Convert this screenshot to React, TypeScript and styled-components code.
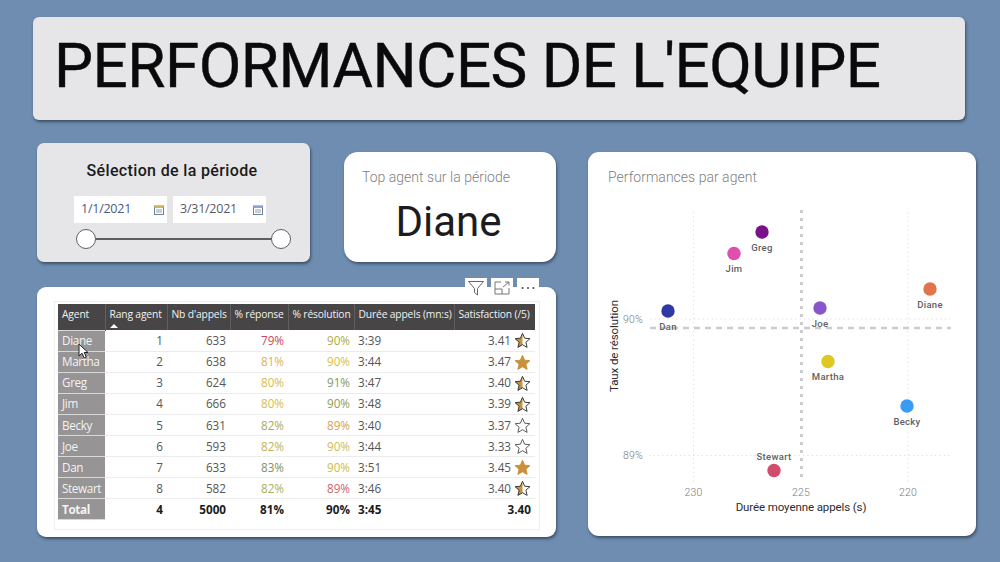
import React from "react";
import styled, { createGlobalStyle } from "styled-components";

const Global = createGlobalStyle`
  html, body { margin: 0; padding: 0; background: #6e8db1; }
  * { box-sizing: border-box; }
`;

const din = `Roboto, "Liberation Sans", sans-serif`;
const segoe = `"Open Sans", "Noto Sans", sans-serif`;

const Page = styled.div`
  width: 1000px;
  height: 562px;
  overflow: hidden;
  background: #6e8db1;
  padding: 17px 0 0 33px;
  font-family: ${din};
`;
const TitleCard = styled.header`
  width: 932px;
  height: 103px;
  background: #e6e5e8;
  border-radius: 6px;
  box-shadow: 1px 2px 3px rgba(35, 45, 60, 0.65);
  display: flex;
  align-items: center;
  padding: 0 0 6px 21px;
`;
const Title = styled.h1`
  margin: 0;
  font: 400 62px/1 ${din};
  letter-spacing: -0.55px;
  color: #0a0a0a;
  white-space: nowrap;
  -webkit-text-stroke: 0.4px #0a0a0a;
`;
const Main = styled.main`
  display: flex;
  margin: 23px 0 0 4px;
`;
const LeftColumn = styled.div`
  width: 519px;
`;
const TopRow = styled.div`
  display: flex;
  align-items: flex-end;
  gap: 34px;
`;
const FilterCard = styled.section`
  width: 273px;
  height: 119px;
  background: #e6e5e8;
  border-radius: 7px;
  box-shadow: 1px 2px 3px rgba(35, 45, 60, 0.65);
  padding: 18px 20px 0 37px;
`;
const FilterTitle = styled.div`
  font: 500 16px/20px ${din};
  letter-spacing: 0.35px;
  color: #1a1a1a;
  text-align: center;
  padding-right: 20px;
`;
const DateRow = styled.div`
  display: flex;
  gap: 6px;
  margin-top: 15px;
`;
const DateBox = styled.div`
  width: 93px;
  height: 27px;
  background: #fff;
  display: flex;
  align-items: center;
  justify-content: space-between;
  padding: 0 3px 0 7px;
  font: 400 12.5px/1 ${segoe};
  letter-spacing: -0.25px;
  color: ${(p: { $c: string }) => p.$c};
`;
const SliderTrack = styled.div`
  display: flex;
  align-items: center;
  width: 215px;
  margin: 6px 0 0 2px;
`;
const Thumb = styled.div`
  width: 20px;
  height: 20px;
  flex: none;
  border-radius: 50%;
  background: #fff;
  border: 1.5px solid #5f5f5f;
`;
const SliderLine = styled.div`
  flex: 1;
  height: 2.5px;
  background: #605e5c;
`;
const TopAgentCard = styled.section`
  width: 212px;
  height: 110px;
  background: #fff;
  border-radius: 14px;
  box-shadow: 1px 2px 3px rgba(35, 45, 60, 0.6);
  padding: 16px 0 0 18px;
`;
const CardHeading = styled.div`
  font: 300 14px/18px ${din};
  letter-spacing: 0.02px;
  color: #7f7f84;
`;
const TopAgentName = styled.div`
  font: 400 42px/48px ${din};
  color: #1c1c1e;
  text-align: center;
  padding-right: 21px;
  margin-top: 12px;
`;
const TableCard = styled.section`
  position: relative;
  margin-top: 25px;
  width: 519px;
  height: 250px;
  background: #fff;
  border-radius: 9px;
  box-shadow: 1px 2px 3px rgba(35, 45, 60, 0.65);
  padding: 14px 0 0 17px;
`;
const TableFrame = styled.div`
  width: 486px;
  height: 229px;
  border: 1px solid #eeeef0;
  padding: 2px 0 0 3px;
`;
const Table = styled.table`
  border-collapse: collapse;
  table-layout: fixed;
  width: 477px;
  font: 400 11.7px/1 ${segoe};
  color: #555;
`;
const Th = styled.th`
  height: 26px;
  background: #474545;
  color: #f2f2f2;
  font-weight: 400;
  font-size: 10.3px;
  letter-spacing: -0.16px;
  text-align: left;
  vertical-align: top;
  padding: 5px 0 0 4px;
  border-left: 1px solid #615f5f;
  white-space: nowrap;
  position: relative;
  &:first-child { border-left: 0; }
`;
const SortArrow = styled.span`
  position: absolute;
  left: 4px;
  bottom: 2px;
  width: 0;
  height: 0;
  border-left: 4px solid transparent;
  border-right: 4px solid transparent;
  border-bottom: 4px solid #fff;
`;
const Tr = styled.tr`
  height: 21.1px;
  border-bottom: 1px solid #ececee;
  &:last-child { border-bottom: 0; }
`;
const AgentCell = styled.td`
  background: #969495;
  color: #f3f3f3;
  padding: 1px 0 0 4px;
  border: 1px solid #d8d8d8;
  border-width: 1px 0;
  letter-spacing: -0.35px;
  font-weight: ${(p: { $b?: boolean }) => (p.$b ? 700 : 400)};
`;
const NumCell = styled.td<{ $c?: string; $b?: boolean }>`
  text-align: right;
  padding: 1px 4px 0 0;
  color: ${(p) => p.$b ? "#1c1c1c" : p.$c || "#555"};
  font-weight: ${(p) => (p.$b ? 700 : 400)};
`;
const TimeCell = styled.td<{ $b?: boolean }>`
  text-align: left;
  padding: 1px 0 0 4px;
  color: ${(p) => (p.$b ? "#1c1c1c" : "#555")};
  font-weight: ${(p) => (p.$b ? 700 : 400)};
`;
const SatInner = styled.div`
  display: flex;
  justify-content: flex-end;
  align-items: center;
  gap: 3px;
  padding: 1px 3px 0 0;
`;
const VisualActions = styled.div`
  position: absolute;
  top: -9px;
  right: 17px;
  display: flex;
  gap: 4px;
`;
const ActionBox = styled.div`
  width: 22px;
  height: 20px;
  background: #fff;
  display: flex;
  align-items: center;
  justify-content: center;
`;
const Cursor = styled.svg`
  position: absolute;
  left: 41px;
  top: 56px;
`;
const ChartCard = styled.section`
  width: 388px;
  height: 384px;
  margin: 9px 0 0 32px;
  background: #fff;
  border-radius: 11px;
  box-shadow: 1px 2px 3px rgba(35, 45, 60, 0.65);
  padding-top: 16px;
`;
const ChartHeading = styled(CardHeading)`
  padding-left: 20px;
  height: 22px;
`;
const ChartSvg = styled.svg`
  display: block;
`;

const STAR = "M8.5 1.3 L10.6 6.2 L15.9 6.7 L11.9 10.2 L13.1 15.4 L8.5 12.7 L3.9 15.4 L5.1 10.2 L1.1 6.7 L6.4 6.2 Z";

const Star = ({ kind }: { kind: "full" | "half" | "none" }) => {
  if (kind === "full")
    return (
      <svg width="17" height="17" viewBox="0 0 17 17">
        <path d={STAR} fill="#c8913a" stroke="#c8913a" strokeWidth="1" strokeLinejoin="round" />
      </svg>
    );
  return (
    <svg width="17" height="17" viewBox="0 0 17 17">
      <path d={STAR} fill="#fff" />
      {kind === "half" && (
        <path d="M8.5 1.3 L8.5 12.7 L3.9 15.4 L5.1 10.2 L1.1 6.7 L6.4 6.2 Z" fill="#c8913a" />
      )}
      <path d={STAR} fill="none" stroke={kind === "half" ? "#3a3a3a" : "#5c5c5c"} strokeWidth="1" strokeLinejoin="round" />
    </svg>
  );
};

const CalendarIcon = ({ accent }: { accent: string }) => (
  <svg width="10" height="10" viewBox="0 0 10 10">
    <rect x="0.5" y="1" width="9" height="8.5" fill="#fff" stroke="#5d7690" strokeWidth="0.9" />
    <rect x="0.5" y="1" width="9" height="2" fill={accent} />
    <path d="M2 5h6M2 7h6" stroke="#7f93aa" strokeWidth="0.9" />
  </svg>
);

type Row = { name: string; rank: number; calls: number; resp: string; respC: string; res: string; resC: string; time: string; sat: string; star: "full" | "half" | "none" };

const rows: Row[] = [
  { name: "Diane", rank: 1, calls: 633, resp: "79%", respC: "#c9475f", res: "90%", resC: "#a9ad4e", time: "3:39", sat: "3.41", star: "half" },
  { name: "Martha", rank: 2, calls: 638, resp: "81%", respC: "#d9b64f", res: "90%", resC: "#d9bf45", time: "3:44", sat: "3.47", star: "full" },
  { name: "Greg", rank: 3, calls: 624, resp: "80%", respC: "#d9b955", res: "91%", resC: "#7e9a68", time: "3:47", sat: "3.40", star: "half" },
  { name: "Jim", rank: 4, calls: 666, resp: "80%", respC: "#d9bb55", res: "90%", resC: "#8ea05e", time: "3:48", sat: "3.39", star: "half" },
  { name: "Becky", rank: 5, calls: 631, resp: "82%", respC: "#a9ab5e", res: "89%", resC: "#d99f52", time: "3:40", sat: "3.37", star: "none" },
  { name: "Joe", rank: 6, calls: 593, resp: "82%", respC: "#c0b45c", res: "90%", resC: "#c9c05a", time: "3:44", sat: "3.33", star: "none" },
  { name: "Dan", rank: 7, calls: 633, resp: "83%", respC: "#7f9168", res: "90%", resC: "#c9bd4e", time: "3:51", sat: "3.45", star: "full" },
  { name: "Stewart", rank: 8, calls: 582, resp: "82%", respC: "#aaae62", res: "89%", resC: "#cf5f72", time: "3:46", sat: "3.40", star: "half" },
];

const points = [
  { n: "Greg", x: 762, y: 232, c: "#7a1389", ly: 251 },
  { n: "Jim", x: 734, y: 253.5, c: "#de4fb0", ly: 272 },
  { n: "Dan", x: 668, y: 311, c: "#2f39a6", ly: 330 },
  { n: "Joe", x: 820, y: 308, c: "#8a55c8", ly: 327 },
  { n: "Diane", x: 930, y: 289, c: "#e2744c", ly: 308 },
  { n: "Martha", x: 828, y: 361.5, c: "#dfc724", ly: 380 },
  { n: "Becky", x: 907, y: 406, c: "#3a9bf5", ly: 425 },
  { n: "Stewart", x: 774, y: 470.5, c: "#d24c6e", ly: 460 },
];

const Plot = () => (
  <ChartSvg width="388" height="346" viewBox="588 190 388 346">
    <g stroke="#dedee3" strokeWidth="1" strokeDasharray="1.2 3.2" fill="none">
      <path d="M693.5 212V484M908 212V484M650 319H950M649 455.5H950" />
    </g>
    <path d="M801.5 210V482" stroke="#cbcbd0" strokeWidth="3" strokeDasharray="3 5" fill="none" />
    <path d="M650 328H951" stroke="#cbcbd0" strokeWidth="2.5" strokeDasharray="6 5" fill="none" />
    <g fontFamily={din} fontSize="10.5" fill="#7a7a7e" fontWeight="300" letterSpacing="0.2">
      <text x="633" y="323" textAnchor="middle">90%</text>
      <text x="633" y="459" textAnchor="middle">89%</text>
      <text x="693.5" y="496" textAnchor="middle">230</text>
      <text x="801" y="496" textAnchor="middle">225</text>
      <text x="908" y="496" textAnchor="middle">220</text>
    </g>
    <g fontFamily={din} fontSize="11.5" fill="#2c2c30" letterSpacing="-0.1">
      <text x="801" y="511" textAnchor="middle">Durée moyenne appels (s)</text>
      <text transform="translate(618 346) rotate(-90)" textAnchor="middle">Taux de résolution</text>
    </g>
    {points.map((p) => (
      <g key={p.n}>
        <circle cx={p.x} cy={p.y} r="6.7" fill={p.c} />
        <text x={p.x} y={p.ly} textAnchor="middle" fontFamily={din} fontSize="9.5" fontWeight="500" fill="#5f5f64" letterSpacing="0.3">{p.n}</text>
      </g>
    ))}
  </ChartSvg>
);

export default function App() {
  return (
    <Page>
      <Global />
      <TitleCard>
        <Title>PERFORMANCES DE L'EQUIPE</Title>
      </TitleCard>
      <Main>
        <LeftColumn>
          <TopRow>
            <FilterCard>
              <FilterTitle>Sélection de la période</FilterTitle>
              <DateRow>
                <DateBox $c="#4a5a80">1/1/2021<CalendarIcon accent="#d8b45a" /></DateBox>
                <DateBox $c="#5a5a60">3/31/2021<CalendarIcon accent="#8fa4cf" /></DateBox>
              </DateRow>
              <SliderTrack>
                <Thumb />
                <SliderLine />
                <Thumb />
              </SliderTrack>
            </FilterCard>
            <TopAgentCard>
              <CardHeading>Top agent sur la période</CardHeading>
              <TopAgentName>Diane</TopAgentName>
            </TopAgentCard>
          </TopRow>
          <TableCard>
            <VisualActions>
              <ActionBox>
                <svg width="18" height="16" viewBox="0 0 18 16" fill="none" stroke="#666" strokeWidth="1">
                  <path d="M1.5 1.5H16.5L10.5 8.5V15L7.5 12.5V8.5Z" strokeLinejoin="round" />
                </svg>
              </ActionBox>
              <ActionBox>
                <svg width="16" height="14" viewBox="0 0 16 14" fill="none" stroke="#777" strokeWidth="1">
                  <path d="M7 1H1V13H15V7" />
                  <path d="M1 8H8V13" />
                  <path d="M9 6L15 1M11 1H15V4.5" />
                </svg>
              </ActionBox>
              <ActionBox>
                <svg width="16" height="4" viewBox="0 0 16 4" fill="#444">
                  <circle cx="2.5" cy="2" r="1" /><circle cx="8" cy="2" r="1" /><circle cx="13.5" cy="2" r="1" />
                </svg>
              </ActionBox>
            </VisualActions>
            <TableFrame>
              <Table>
                <colgroup>
                  <col width="47" /><col width="62" /><col width="63" /><col width="58" /><col width="66" /><col width="100" /><col width="81" />
                </colgroup>
                <thead>
                  <tr>
                    <Th>Agent</Th>
                    <Th>Rang agent<SortArrow /></Th>
                    <Th>Nb d'appels</Th>
                    <Th>% réponse</Th>
                    <Th>% résolution</Th>
                    <Th>Durée appels (mn:s)</Th>
                    <Th>Satisfaction (/5)</Th>
                  </tr>
                </thead>
                <tbody>
                  {rows.map((r) => (
                    <Tr key={r.name}>
                      <AgentCell>{r.name}</AgentCell>
                      <NumCell>{r.rank}</NumCell>
                      <NumCell>{r.calls}</NumCell>
                      <NumCell $c={r.respC}>{r.resp}</NumCell>
                      <NumCell $c={r.resC}>{r.res}</NumCell>
                      <TimeCell>{r.time}</TimeCell>
                      <td>
                        <SatInner>{r.sat}<Star kind={r.star} /></SatInner>
                      </td>
                    </Tr>
                  ))}
                  <Tr>
                    <AgentCell $b>Total</AgentCell>
                    <NumCell $b>4</NumCell>
                    <NumCell $b>5000</NumCell>
                    <NumCell $b>81%</NumCell>
                    <NumCell $b>90%</NumCell>
                    <TimeCell $b>3:45</TimeCell>
                    <NumCell $b>3.40</NumCell>
                  </Tr>
                </tbody>
              </Table>
            </TableFrame>
            <Cursor width="12" height="16" viewBox="0 0 12 16">
              <path d="M1 1V13L4 10.2L6.2 15L8.3 14L6.2 9.5H10Z" fill="#fff" stroke="#222" strokeWidth="1" strokeLinejoin="round" />
            </Cursor>
          </TableCard>
        </LeftColumn>
        <ChartCard>
          <ChartHeading>Performances par agent</ChartHeading>
          <Plot />
        </ChartCard>
      </Main>
    </Page>
  );
}
